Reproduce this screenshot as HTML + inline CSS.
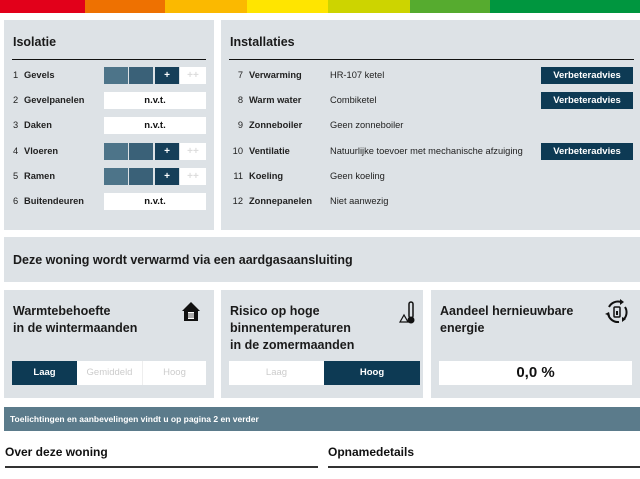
<!DOCTYPE html>
<html><head><meta charset="utf-8"><style>
*{margin:0;padding:0;box-sizing:border-box}
body{width:640px;height:479px;background:#fff;font-family:"Liberation Sans",Arial,sans-serif;color:#111;position:relative;overflow:hidden}
.a{position:absolute}
.p{position:absolute;background:#dde2e6}
.h{font-weight:bold;font-size:12.5px;color:#1a1a1a}
.r{font-size:9.3px;color:#222}
.b{font-weight:bold}
.seg{position:absolute;top:0;height:17px;width:24px;color:#fff;font-size:10px;text-align:center;line-height:17px;font-weight:bold}
.btn{position:absolute;left:541px;width:92px;height:17px;background:#0d3a54;color:#fff;font-weight:bold;font-size:9.5px;text-align:center;line-height:17px}
</style></head><body>
<div class="a" style="left:0;top:0;width:85px;height:13px;background:#e2001a"></div>
<div class="a" style="left:85px;top:0;width:80px;height:13px;background:#ee7101"></div>
<div class="a" style="left:165px;top:0;width:82px;height:13px;background:#fbb900"></div>
<div class="a" style="left:247px;top:0;width:81px;height:13px;background:#ffe500"></div>
<div class="a" style="left:328px;top:0;width:82px;height:13px;background:#cdd400"></div>
<div class="a" style="left:410px;top:0;width:80px;height:13px;background:#56ab2f"></div>
<div class="a" style="left:490px;top:0;width:150px;height:13px;background:#00963f"></div>

<div class="p" style="left:4px;top:20px;width:210px;height:210px"></div>
<div class="a h" style="left:13px;top:35px">Isolatie</div>
<div class="a" style="left:12px;top:59px;width:194px;height:1px;background:#111"></div>

<div class="p" style="left:221px;top:20px;width:419px;height:210px"></div>
<div class="a h" style="left:230px;top:35px">Installaties</div>
<div class="a" style="left:229px;top:59px;width:405px;height:1px;background:#111"></div>

<div id="iso"></div>
<script>
var iso=[["1","Gevels",1],["2","Gevelpanelen",0],["3","Daken",0],["4","Vloeren",1],["5","Ramen",1],["6","Buitendeuren",0]];
var h="";iso.forEach(function(r,i){var y=75+i*25.2;
h+='<div class="a r" style="left:13px;top:'+(y-5)+'px">'+r[0]+'</div><div class="a r b" style="left:24px;top:'+(y-5)+'px">'+r[1]+'</div>';
if(r[2]){h+='<div class="a" style="left:104px;top:'+(y-8)+'px;width:102px;height:17px">'+
'<div class="seg" style="left:0;background:#4d7489"></div><div class="seg" style="left:25px;background:#3a6178"></div><div class="seg" style="left:51px;background:#163f59">+</div><div class="seg" style="left:76px;width:26px;background:#fff;color:#ddd">++</div></div>';}
else h+='<div class="a b" style="left:104px;top:'+(y-8)+'px;width:102px;height:17px;background:#fff;font-size:9.5px;text-align:center;line-height:17px">n.v.t.</div>';});
var ins=[["7","Verwarming","HR-107 ketel",1],["8","Warm water","Combiketel",1],["9","Zonneboiler","Geen zonneboiler",0],["10","Ventilatie","Natuurlijke toevoer met mechanische afzuiging",1],["11","Koeling","Geen koeling",0],["12","Zonnepanelen","Niet aanwezig",0]];
ins.forEach(function(r,i){var y=75+i*25.2;
h+='<div class="a r" style="left:226px;width:17px;text-align:right;top:'+(y-5)+'px">'+r[0]+'</div><div class="a r b" style="left:249px;top:'+(y-5)+'px">'+r[1]+'</div><div class="a r" style="left:330px;top:'+(y-5)+'px">'+r[2]+'</div>';
if(r[3])h+='<div class="btn" style="top:'+(y-8)+'px">Verbeteradvies</div>';});
document.getElementById("iso").innerHTML=h;
</script>

<div class="p" style="left:4px;top:237px;width:636px;height:45px"></div>
<div class="a h" style="left:13px;top:253px;font-size:12.5px">Deze woning wordt verwarmd via een aardgasaansluiting</div>

<div class="p" style="left:4px;top:290px;width:210px;height:108px"></div>
<div class="a h" style="left:13px;top:303px;line-height:17px;font-weight:bold">Warmtebehoefte<br>in de wintermaanden</div>
<svg class="a" style="left:181px;top:301px" width="20" height="22" viewBox="0 0 20 22"><path d="M10 1 L1 10 H3 V20 H17 V10 H19 Z" fill="#111"/><rect x="7" y="11" width="6" height="7" fill="#fff"/><path d="M8 12v5M10 12v5M12 12v5" stroke="#111" stroke-width=".7"/></svg>
<div class="a" style="left:12px;top:361px;width:65px;height:24px;background:#0d3a54;color:#fff;font-weight:bold;font-size:9.5px;text-align:center;line-height:24px">Laag</div>
<div class="a" style="left:77px;top:361px;width:65px;height:24px;background:#fff;color:#ccc;font-size:9.5px;text-align:center;line-height:24px">Gemiddeld</div>
<div class="a" style="left:142px;top:361px;width:64px;height:24px;background:#fff;color:#ccc;font-size:9.5px;text-align:center;line-height:24px;border-left:1px solid #eee">Hoog</div>

<div class="p" style="left:221px;top:290px;width:202px;height:108px"></div>
<div class="a h" style="left:230px;top:303px;line-height:17px">Risico op hoge<br>binnentemperaturen<br>in de zomermaanden</div>
<svg class="a" style="left:398px;top:300px" width="20" height="26" viewBox="0 0 20 26"><path d="M2 22 L6 15 L10 22 Z" fill="none" stroke="#111" stroke-width="1.2"/><rect x="11" y="2" width="4" height="16" rx="2" fill="none" stroke="#111" stroke-width="1.5"/><circle cx="13" cy="20" r="3.5" fill="#111"/></svg>
<div class="a" style="left:229px;top:361px;width:95px;height:24px;background:#fff;color:#ccc;font-size:9.5px;text-align:center;line-height:24px">Laag</div>
<div class="a" style="left:324px;top:361px;width:96px;height:24px;background:#0d3a54;color:#fff;font-weight:bold;font-size:9.5px;text-align:center;line-height:24px">Hoog</div>

<div class="p" style="left:431px;top:290px;width:209px;height:108px"></div>
<div class="a h" style="left:440px;top:303px;line-height:17px">Aandeel hernieuwbare<br>energie</div>
<svg class="a" style="left:604px;top:299px" width="26" height="26" viewBox="0 0 26 26"><path d="M5 8 A10 10 0 0 1 17 3" fill="none" stroke="#111" stroke-width="2"/><path d="M21 8 A10 10 0 0 1 19 21" fill="none" stroke="#111" stroke-width="2"/><path d="M15 23 A10 10 0 0 1 4 14" fill="none" stroke="#111" stroke-width="2"/><path d="M16 0l4 3-4 3z M22 20l-4 3 0-5z M1 15l4-2 1 4z" fill="#111"/><rect x="10" y="8" width="6" height="10" rx="1" fill="none" stroke="#111" stroke-width="1.5"/><rect x="12" y="12" width="2" height="4" fill="#111"/></svg>
<div class="a" style="left:439px;top:361px;width:193px;height:24px;background:#fff;font-weight:bold;font-size:15px;text-align:center;line-height:24px">0,0 %</div>

<div class="a" style="left:4px;top:407px;width:636px;height:24px;background:#5b7b8b"></div>
<div class="a" style="left:10px;top:414px;color:#fff;font-weight:bold;font-size:8.5px">Toelichtingen en aanbevelingen vindt u op pagina 2 en verder</div>

<div class="a b" style="left:5px;top:445px;font-size:12px">Over deze woning</div>
<div class="a" style="left:5px;top:466px;width:313px;height:2px;background:#333"></div>
<div class="a b" style="left:328px;top:445px;font-size:12px">Opnamedetails</div>
<div class="a" style="left:328px;top:466px;width:312px;height:2px;background:#333"></div>
</body></html>
